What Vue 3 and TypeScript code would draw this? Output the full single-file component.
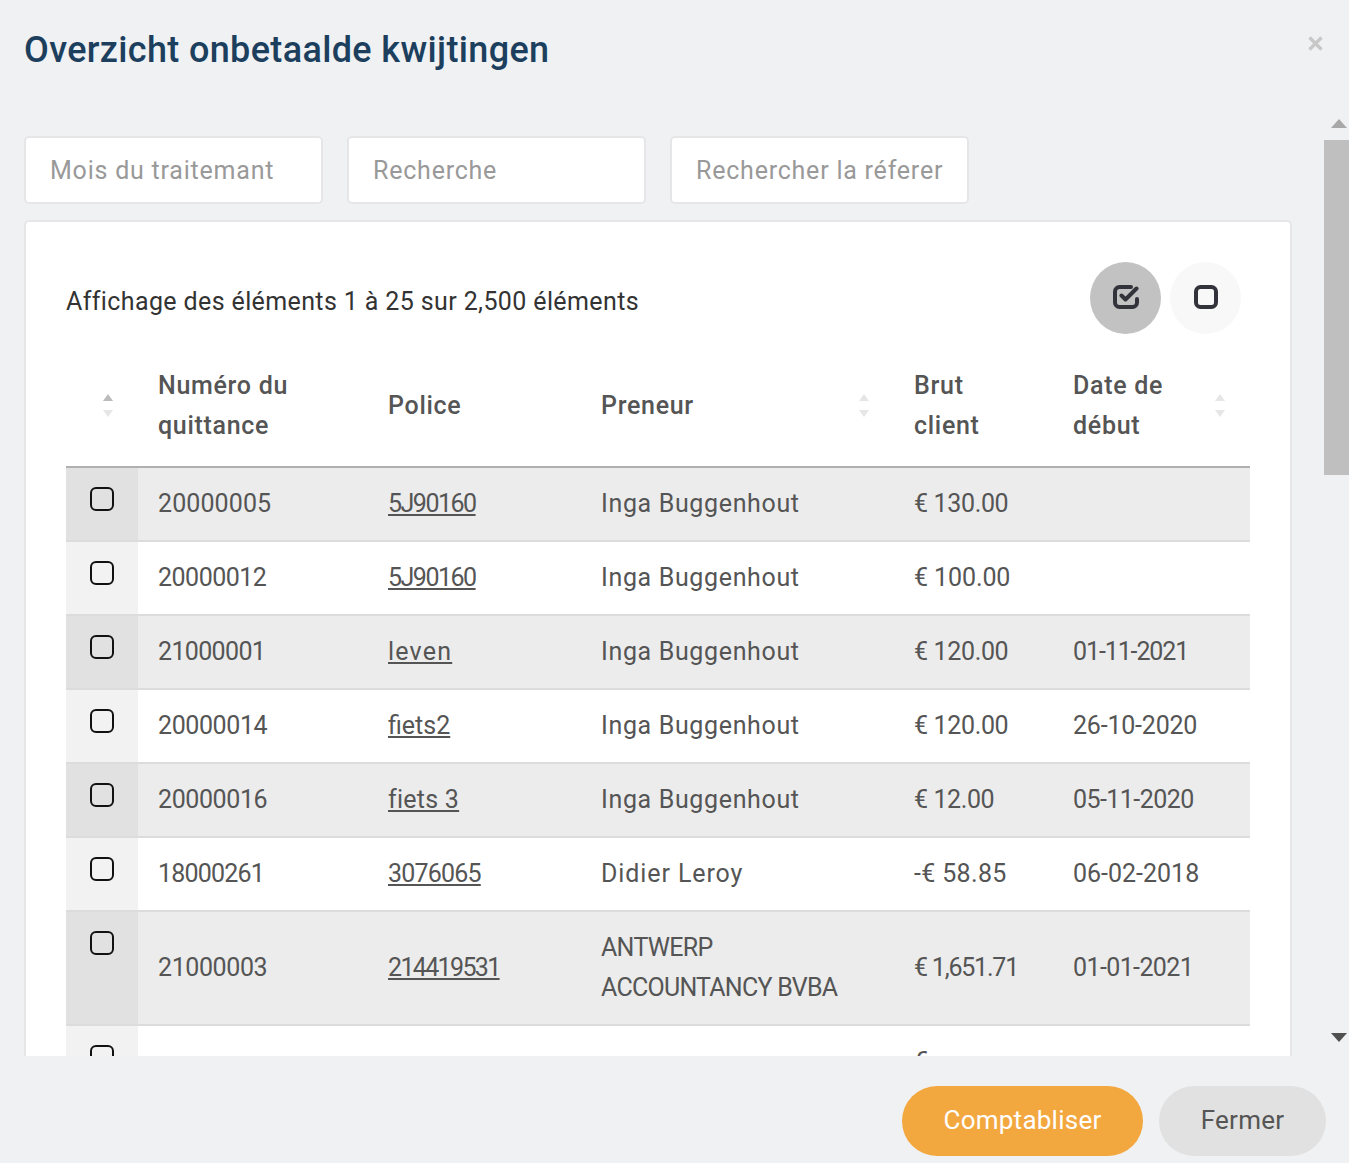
<script setup lang="ts">
type Cell = [string, number]

interface Row {
  number: Cell
  police: Cell
  holder: Cell[]
  gross: Cell[]
  start: Cell
}

// Each text carries the tracking (px) that brings it to the width it has in the design.
const rows: Row[] = [
  { number: ['20000005', 0.1], police: ['5J90160', -1.5], holder: [['Inga Buggenhout', 0.65]], gross: [['€ 130.00', -0.35]], start: ['', 0] },
  { number: ['20000012', -0.5], police: ['5J90160', -1.5], holder: [['Inga Buggenhout', 0.65]], gross: [['€ 100.00', -0.1]], start: ['', 0] },
  { number: ['21000001', -0.65], police: ['leven', 1.2], holder: [['Inga Buggenhout', 0.65]], gross: [['€ 120.00', -0.35]], start: ['01-11-2021', -1.1] },
  { number: ['20000014', -0.4], police: ['fiets2', 0], holder: [['Inga Buggenhout', 0.65]], gross: [['€ 120.00', -0.35]], start: ['26-10-2020', -0.2] },
  { number: ['20000016', -0.4], police: ['fiets 3', 0.25], holder: [['Inga Buggenhout', 0.65]], gross: [['€ 12.00', -0.4]], start: ['05-11-2020', -0.55] },
  { number: ['18000261', -0.8], police: ['3076065', -0.8], holder: [['Didier Leroy', 0.9]], gross: [['-€ 58.85', 0.35]], start: ['06-02-2018', 0] },
  { number: ['21000003', -0.4], police: ['214419531', -1.65], holder: [['ANTWERP', -0.7], ['ACCOUNTANCY BVBA', -0.75]], gross: [['€ 1,651.71', -1.2]], start: ['01-01-2021', -0.6] },
  { number: ['', 0], police: ['', 0], holder: [['', 0]], gross: [['€', 0], ['', 0]], start: ['', 0] }
]

const track = (cell: Cell) => ({ letterSpacing: `${cell[1]}px` })
</script>

<template>
  <div class="modal">
    <header class="head">
      <h1>Overzicht onbetaalde kwijtingen</h1>
      <button class="close" aria-label="Fermer">
        <svg width="15" height="15" viewBox="0 0 15 15"><path d="M1.500 1.500l12 12M13.500 1.500l-12 12" /></svg>
      </button>
    </header>

    <div class="middle">
      <main class="scroll">
        <div class="filters">
          <input placeholder="Mois du traitemant" />
          <input placeholder="Recherche" />
          <input placeholder="Rechercher la réferer" />
        </div>

        <section class="card">
          <div class="info">
            <span>Affichage des éléments 1 à 25 sur 2,500 éléments</span>
            <div class="tools">
              <button class="tool on" aria-label="Tout sélectionner">
                <svg width="26" height="24" viewBox="0 0 26 24">
                  <path class="ln" d="M18 2H6.500a4.500 4.500 0 0 0-4.500 4.500v11a4.500 4.500 0 0 0 4.500 4.500h13a4.500 4.500 0 0 0 4.500-4.500V14" />
                  <path class="ln" d="M8.500 10.500l4 4L23.500 3.500" />
                </svg>
              </button>
              <button class="tool" aria-label="Tout désélectionner">
                <svg width="24" height="24" viewBox="0 0 24 24">
                  <rect class="ln" x="2" y="2" width="20" height="20" rx="4.500" />
                </svg>
              </button>
            </div>
          </div>

          <table>
            <colgroup>
              <col class="c0" /><col class="c1" /><col class="c2" /><col class="c3" /><col class="c4" /><col class="c5" />
            </colgroup>
            <thead>
              <tr>
                <th class="sort active"><i class="up"></i><i class="down"></i></th>
                <th>Numéro du<br />quittance</th>
                <th>Police</th>
                <th class="sort">Preneur<i class="up"></i><i class="down"></i></th>
                <th>Brut<br />client</th>
                <th class="sort">Date de<br />début<i class="up"></i><i class="down"></i></th>
              </tr>
            </thead>
            <tbody>
              <tr v-for="(row, i) in rows" :key="i">
                <td class="check"><input type="checkbox" /></td>
                <td :style="track(row.number)">{{ row.number[0] }}</td>
                <td :style="track(row.police)"><a href="#">{{ row.police[0] }}</a></td>
                <td><div v-for="(line, j) in row.holder" :key="j" :style="track(line)">{{ line[0] }}</div></td>
                <td><div v-for="(line, j) in row.gross" :key="j" class="line" :style="track(line)">{{ line[0] }}</div></td>
                <td :style="track(row.start)">{{ row.start[0] }}</td>
              </tr>
            </tbody>
          </table>
        </section>
      </main>

      <div class="scrollbar">
        <div class="arrow-box top"><span class="tri up-tri"></span></div>
        <div class="thumb"></div>
        <div class="spacer"></div>
        <div class="arrow-box bottom"><span class="tri down-tri"></span></div>
      </div>
    </div>

    <footer class="foot">
      <button class="btn primary">Comptabliser</button>
      <button class="btn plain">Fermer</button>
    </footer>
  </div>
</template>

<style>
html,
body {
  margin: 0;
  background: #f0f1f3;
}
</style>

<style scoped>
.modal {
  width: 1349px;
  height: 1163px;
  display: flex;
  flex-direction: column;
  overflow: hidden;
  background: #f0f1f3;
  font-family: Roboto, "Open Sans", sans-serif;
  font-size: 25px;
  color: #555;
}
.head {
  flex: none;
  height: 115px;
  box-sizing: border-box;
  padding: 26px 26px 0 24px;
  display: flex;
  justify-content: space-between;
  align-items: flex-start;
}
h1 {
  margin: 0;
  font-size: 36px;
  line-height: 48px;
  font-weight: 500;
  letter-spacing: 0.35px;
  color: #1d3f5e;
}
.close {
  margin-top: 10px;
  padding: 0;
  border: 0;
  background: none;
  display: block;
}
.close svg {
  display: block;
}
.close path {
  stroke: #c8c8c8;
  stroke-width: 3.4;
  fill: none;
}
.middle {
  flex: 1;
  min-height: 0;
  display: flex;
}
.scroll {
  flex: 1;
  min-width: 0;
  overflow: hidden;
  padding: 21px 32px 0 24px;
}
.filters {
  display: flex;
  gap: 24px;
  margin-bottom: 16px;
}
.filters input {
  width: 299px;
  height: 68px;
  box-sizing: border-box;
  padding: 0 24px;
  border: 2px solid #e6e6e8;
  border-radius: 5px;
  background: #fff;
  font: inherit;
  letter-spacing: 0.78px;
  outline: none;
}
.filters input::placeholder {
  color: #999;
  opacity: 1;
}
.card {
  box-sizing: border-box;
  width: 1268px;
  padding: 40px 40px 0;
  border: 2px solid #e6e6e8;
  border-radius: 5px;
  background: #fff;
}
.info {
  display: flex;
  justify-content: space-between;
  align-items: center;
  height: 72px;
  margin-bottom: 32px;
  color: #333;
}
.info span {
  margin-top: 6px;
  letter-spacing: 0.38px;
}
.tools {
  display: flex;
  gap: 9px;
  margin-right: 9px;
}
.tool {
  width: 71px;
  height: 72px;
  padding: 0 0 2px;
  border: 0;
  border-radius: 50%;
  background: #f8f8f8;
  display: flex;
  align-items: center;
  justify-content: center;
}
.tool.on {
  background: #c2c2c2;
}
.ln {
  fill: none;
  stroke: #33333b;
  stroke-width: 4;
  stroke-linecap: round;
  stroke-linejoin: round;
}
table {
  width: 1184px;
  table-layout: fixed;
  border-collapse: separate;
  border-spacing: 0;
}
.c0 { width: 72px; }
.c1 { width: 230px; }
.c2 { width: 213px; }
.c3 { width: 313px; }
.c4 { width: 159px; }
.c5 { width: 197px; }
th {
  position: relative;
  box-sizing: border-box;
  padding: 0 20px 20px;
  border-bottom: 2px solid #b0b0b0;
  line-height: 40px;
  font-weight: 500;
  letter-spacing: 0.7px;
  text-align: left;
  color: #555;
}
th i {
  position: absolute;
  right: 25px;
  width: 0;
  height: 0;
  border-left: 5px solid transparent;
  border-right: 5px solid transparent;
}
th i.up {
  top: 28px;
  border-bottom: 7px solid #e6e6e6;
}
th i.down {
  top: 44px;
  border-top: 7px solid #e6e6e6;
}
th.active i.up {
  border-bottom-color: #bbb;
}
td {
  box-sizing: border-box;
  padding: 16px 20px;
  border-bottom: 2px solid #dcdcdc;
  line-height: 40px;
  vertical-align: middle;
}
tbody tr:nth-child(odd) td {
  background: #ececec;
}
td.check {
  padding: 19px 0 0;
  text-align: center;
  vertical-align: top;
  background: #f2f2f2;
}
tbody tr:nth-child(odd) td.check {
  background: #e1e1e1;
}
td.check input {
  appearance: none;
  display: block;
  width: 24px;
  height: 24px;
  box-sizing: border-box;
  margin: 0 auto;
  border: 2px solid #111;
  border-radius: 6px;
  background: transparent;
}
td a {
  color: #555;
  text-decoration: underline;
}
.line {
  min-height: 40px;
}
.scrollbar {
  flex: none;
  width: 25px;
  display: flex;
  flex-direction: column;
}
.arrow-box {
  flex: none;
  height: 25px;
  box-sizing: border-box;
  padding-left: 4px;
  display: flex;
  justify-content: center;
  align-items: flex-start;
}
.arrow-box.top {
  padding-top: 4px;
}
.arrow-box.bottom {
  padding-top: 2px;
}
.tri {
  width: 0;
  height: 0;
  border-left: 8px solid transparent;
  border-right: 8px solid transparent;
}
.up-tri {
  border-bottom: 9px solid #a8a8a8;
}
.down-tri {
  border-top: 9px solid #505050;
}
.thumb {
  flex: none;
  height: 335px;
  background: #bfbfbf;
}
.spacer {
  flex: 1;
}
.foot {
  flex: none;
  height: 107px;
  box-sizing: border-box;
  padding: 30px 23px 0 0;
  display: flex;
  justify-content: flex-end;
  gap: 16px;
}
.btn {
  height: 70px;
  border: 0;
  border-radius: 35px;
  font: inherit;
  font-size: 26px;
  letter-spacing: 0.25px;
  padding: 0 0 2px;
}
.primary {
  width: 241px;
  background: #f3a73f;
  color: #fff;
}
.plain {
  width: 167px;
  background: #e1e1e1;
  color: #555;
}
</style>
